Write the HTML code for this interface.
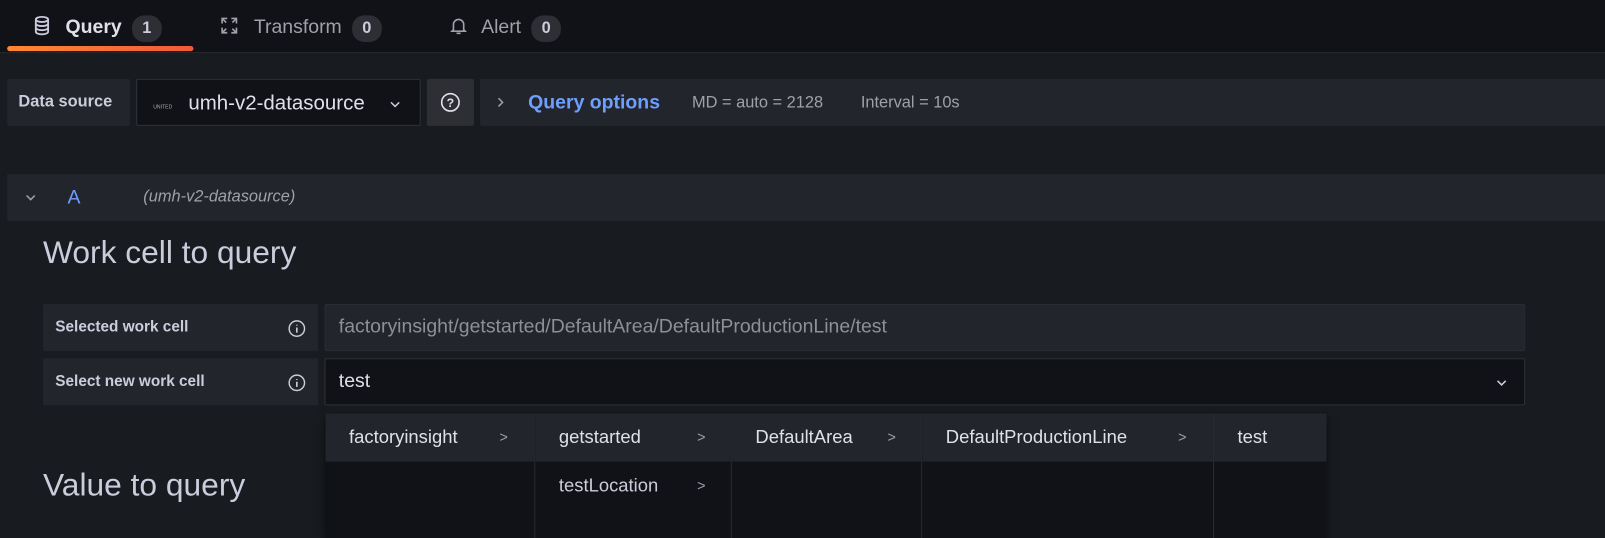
<!DOCTYPE html>
<html><head><style>
*{box-sizing:border-box;margin:0;padding:0}
body{width:1605px;height:526px;overflow:hidden;background:#181b1f;font-family:"Liberation Sans",sans-serif;color:#ccccdc;position:relative}
#w{position:absolute;left:0;top:0;width:1568px;height:514px;transform:scale(1.0236);transform-origin:0 0}
.a{position:absolute}
.tabs{left:0;top:0;width:1568px;height:52px;background:#111217;border-bottom:1px solid #2a2c31}
.badge{display:inline-block;background:#2d2f34;color:#ccccdc;border-radius:12px;padding:0 10px;height:26px;line-height:26px;font-size:16px;margin-left:10px;font-weight:bold}
.tab{top:14px;font-size:19px;height:26px;line-height:26px}
.lbl{background:#22252b;font-size:15px;font-weight:bold;color:#ccccdc;border-radius:2px}
.col{top:404px;height:122px;border-right:1px solid #2a2c31;background:#111217}
.hd{height:47px;background:#22252b;line-height:47px;font-size:18px;color:#e0e0ea;padding-left:23px;position:relative}
.ch{position:absolute;font-size:14px;color:#9fa1a8}
</style></head><body><div id="w">
<div class="a tabs"></div>
<div class="a tab" style="left:32px;color:#e0e0ea;font-weight:bold">
<svg width="18" height="20" viewBox="0 0 18 20" style="vertical-align:-3px;margin-right:14px"><g fill="none" stroke="#ccccdc" stroke-width="1.8"><ellipse cx="9" cy="4" rx="6" ry="2.5"/><path d="M3 4v12c0 1.4 2.7 2.5 6 2.5s6-1.1 6-2.5V4M3 8c0 1.4 2.7 2.5 6 2.5s6-1.1 6-2.5M3 12c0 1.4 2.7 2.5 6 2.5s6-1.1 6-2.5"/></g></svg>Query<span class="badge">1</span></div>
<div class="a" style="left:7px;top:45px;width:182px;height:5px;border-radius:3px;background:linear-gradient(90deg,#ff8833,#f05a3a)"></div>
<div class="a tab" style="left:214px;color:#9fa1a8">
<svg width="20" height="20" viewBox="0 0 20 20" style="vertical-align:-3px;margin-right:14px"><g fill="none" stroke="#9fa1a8" stroke-width="1.6"><path d="M3 8V3h5M12 3h5v5M17 12v5h-5M8 17H3v-5M3 3l4 4M17 3l-4 4M17 17l-4-4M3 17l4-4"/></g></svg>Transform<span class="badge">0</span></div>
<div class="a tab" style="left:440px;color:#9fa1a8">
<svg width="16" height="20" viewBox="0 0 16 20" style="vertical-align:-3px;margin-right:14px"><path d="M3 14V9a5 5 0 0110 0v5l1.5 1.5h-13zM6 17.5h4" fill="none" stroke="#9fa1a8" stroke-width="1.6"/></svg>Alert<span class="badge">0</span></div>

<div class="a lbl" style="left:7px;top:77px;width:120px;height:46px;line-height:46px;padding-left:11px;font-size:16px">Data source</div>
<div class="a" style="left:133px;top:77px;width:278px;height:46px;background:#111217;border:1px solid #2f3137;border-radius:2px">
<div class="a" style="left:12px;top:13px;width:26px;height:20px;font-size:5px;color:#aaa;text-align:center;padding-top:11px">UNITED</div>
<div class="a" style="left:50px;top:12px;font-size:20px;color:#e0e0ea">umh-v2-datasource</div>
<svg class="a" style="left:246px;top:19px" width="12" height="10"><path d="M2 3l4 4 4-4" fill="none" stroke="#ccccdc" stroke-width="1.5"/></svg></div>
<div class="a" style="left:417px;top:77px;width:46px;height:46px;background:#2d2f34;border-radius:2px">
<svg width="20" height="20" viewBox="0 0 20 20" style="position:absolute;left:13px;top:13px"><circle cx="10" cy="10" r="8.5" fill="none" stroke="#e0e0ea" stroke-width="1.6"/><text x="10" y="14.5" text-anchor="middle" font-size="12" font-weight="bold" fill="#e0e0ea" font-family="Liberation Sans">?</text></svg></div>
<div class="a" style="left:469px;top:77px;width:1136px;height:46px;background:#22252b;border-radius:2px">
<svg class="a" style="left:15px;top:17px" width="10" height="12"><path d="M3 2l4 4-4 4" fill="none" stroke="#9fa1a8" stroke-width="1.5"/></svg>
<div class="a" style="left:47px;top:13px;font-size:19px;color:#6e9fff;font-weight:bold">Query options</div>
<div class="a" style="left:207px;top:15px;font-size:16px;color:#9fa1a8">MD = auto = 2128</div>
<div class="a" style="left:372px;top:15px;font-size:16px;color:#9fa1a8">Interval = 10s</div></div>

<div class="a" style="left:7px;top:170px;width:1598px;height:46px;background:#22252b">
<svg class="a" style="left:17px;top:18px" width="12" height="10"><path d="M2 3l4 4 4-4" fill="none" stroke="#9fa1a8" stroke-width="1.5"/></svg>
<div class="a" style="left:59px;top:13px;font-size:19px;color:#6e9fff">A</div>
<div class="a" style="left:133px;top:14px;font-size:16px;color:#9fa1a8;font-style:italic">(umh-v2-datasource)</div></div>

<div class="a" style="left:42px;top:229px;font-size:31px;color:#ccccdc">Work cell to query</div>
<div class="a" style="left:42px;top:456px;font-size:31px;color:#ccccdc">Value to query</div>

<div class="a lbl" style="left:42px;top:297px;width:269px;height:46px;line-height:46px;padding-left:12px">Selected work cell</div>
<div class="a lbl" style="left:42px;top:350px;width:269px;height:46px;line-height:46px;padding-left:12px">Select new work cell</div>
<svg class="a" style="left:281px;top:312px" width="18" height="18"><circle cx="9" cy="9" r="7.5" fill="none" stroke="#ccccdc" stroke-width="1.4"/><path d="M9 8v5M9 5.3v.8" stroke="#ccccdc" stroke-width="1.6"/></svg>
<svg class="a" style="left:281px;top:365px" width="18" height="18"><circle cx="9" cy="9" r="7.5" fill="none" stroke="#ccccdc" stroke-width="1.4"/><path d="M9 8v5M9 5.3v.8" stroke="#ccccdc" stroke-width="1.6"/></svg>
<div class="a" style="left:317px;top:297px;width:1173px;height:46px;background:#22252b;border:1px solid #2a2c31;border-radius:2px;padding-left:13px;line-height:44px;font-size:19px;color:#8e9097">factoryinsight/getstarted/DefaultArea/DefaultProductionLine/test</div>
<div class="a" style="left:317px;top:350px;width:1173px;height:46px;background:#111217;border:1px solid #2f3137;border-radius:2px;padding-left:13px;line-height:44px;font-size:19px;color:#e0e0ea">test<svg style="position:absolute;right:16px;top:18px" width="12" height="10"><path d="M2 3l4 4 4-4" fill="none" stroke="#ccccdc" stroke-width="1.5"/></svg></div>

<div class="a" style="left:318px;top:404px;width:978px;height:122px;background:#111217;box-shadow:0 4px 8px rgba(0,0,0,.5)"></div>
<div class="a col" style="left:318px;width:205px"><div class="hd">factoryinsight<span class="ch" style="left:170px">&gt;</span></div></div>
<div class="a col" style="left:523px;width:192px"><div class="hd">getstarted<span class="ch" style="left:158px">&gt;</span></div>
<div style="position:relative;height:47px;line-height:47px;font-size:18px;padding-left:23px;color:#ccccdc">testLocation<span class="ch" style="left:158px">&gt;</span></div></div>
<div class="a col" style="left:715px;width:186px"><div class="hd">DefaultArea<span class="ch" style="left:152px">&gt;</span></div></div>
<div class="a col" style="left:901px;width:285px"><div class="hd">DefaultProductionLine<span class="ch" style="left:250px">&gt;</span></div></div>
<div class="a col" style="left:1186px;width:110px;border-right:none"><div class="hd">test</div></div>
</div></body></html>
